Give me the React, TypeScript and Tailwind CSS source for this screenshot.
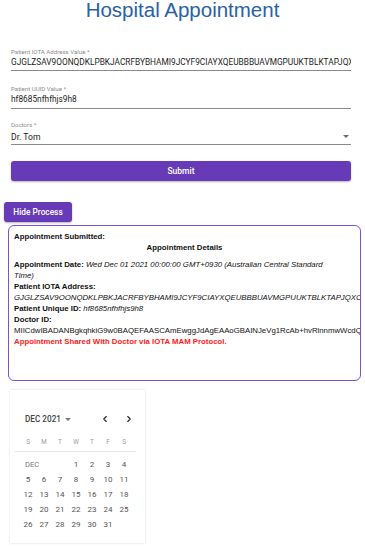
import { ChevronLeft, ChevronRight } from 'lucide-react';

const roboto = { fontFamily: 'Roboto, "Liberation Sans", sans-serif' };
const arial = { fontFamily: '"Liberation Sans", Arial, sans-serif' };

function Field({ label, value, select, top, pb }: { label: string; value: string; select?: boolean; top: string; pb: string }) {
  return (
    <div className={`${top} ml-[11px] w-[340px] border-b border-[#8a8a8a] ${pb} relative`}>
      <div className="text-[6.1px] leading-[8px] text-[#8c8c8c]">{label}</div>
      <div className={`${select ? 'text-[8.6px] leading-[12px] mt-[2px]' : 'text-[8.3px] leading-[10px] mt-[1px]'} text-[#1c1c1c] whitespace-nowrap overflow-hidden`}>
        {value}
      </div>
      {select && (
        <div className="absolute right-[2px] bottom-[6px] w-0 h-0 border-l-[3.5px] border-r-[3.5px] border-t-[3.5px] border-l-transparent border-r-transparent border-t-[#6b6b6b]" />
      )}
    </div>
  );
}

const weeks: (number | null)[][] = [
  [null, null, null, 1, 2, 3, 4],
  [5, 6, 7, 8, 9, 10, 11],
  [12, 13, 14, 15, 16, 17, 18],
  [19, 20, 21, 22, 23, 24, 25],
  [26, 27, 28, 29, 30, 31, null],
];

export default function App() {
  return (
    <div className="w-[365px] h-[550px] bg-white overflow-hidden" style={roboto}>
      <h1 className="-mt-[2px] text-center text-[20.5px] leading-[24px] text-[#2862a6]" style={arial}>
        Hospital Appointment
      </h1>

      <Field label="Patient IOTA Address Value *" value="GJGLZSAV9OONQDKLPBKJACRFBYBHAMI9JCYF9CIAYXQEUBBBUAVMGPUUKTBLKTAPJQX" top="mt-[26px]" pb="pb-[3px]" />
      <Field label="Patient UUID Value *" value="hf8685nfhfhjs9h8" top="mt-[14px]" pb="pb-[4px]" />
      <Field label="Doctors *" value="Dr. Tom" select top="mt-[12px]" pb="pb-[1px]" />

      <button className="mt-[16px] ml-[11px] w-[340px] h-[20px] rounded-[3px] bg-[#673ab7] text-white text-[8.5px] font-medium shadow-[0_1px_2px_rgba(0,0,0,0.3)]">
        Submit
      </button>

      <button className="block mt-[21px] ml-[4px] w-[68px] h-[20px] rounded-[3px] bg-[#673ab7] text-white text-[8.3px] font-medium shadow-[0_1px_2px_rgba(0,0,0,0.3)]">
        Hide Process
      </button>

      <div className="mt-[3px] ml-[8px] w-[353px] h-[156px] border-[1.5px] border-[#7b52d1] rounded-[6px] overflow-hidden pl-[5px] pt-[5px] text-[7.8px] leading-[11px] text-[#111] whitespace-nowrap" style={arial}>
        <div className="font-bold">Appointment Submitted:</div>
        <div className="font-bold text-center pr-[5px]">Appointment Details</div>
        <div className="mt-[6px] whitespace-normal pr-[20px]">
          <span className="font-bold">Appointment Date:</span>{' '}
          <span className="italic">Wed Dec 01 2021 00:00:00 GMT+0930 (Australian Central Standard Time)</span>
        </div>
        <div className="font-bold">Patient IOTA Address:</div>
        <div className="italic">GJGLZSAV9OONQDKLPBKJACRFBYBHAMI9JCYF9CIAYXQEUBBBUAVMGPUUKTBLKTAPJQXCDEFGH</div>
        <div>
          <span className="font-bold">Patient Unique ID:</span>{' '}
          <span className="italic">hf8685nfhfhjs9h8</span>
        </div>
        <div className="font-bold">Doctor ID:</div>
        <div>MIICdwIBADANBgkqhkiG9w0BAQEFAASCAmEwggJdAgEAAoGBAINJeVg1RcAb+hvRlnnmwWcdQk</div>
        <div className="font-bold text-[#ff1a1a]">Appointment Shared With Doctor via IOTA MAM Protocol.</div>
      </div>

      <div className="mt-[9px] ml-[10px] w-[135px] h-[153px] bg-white shadow-[0_0_2px_rgba(0,0,0,0.18)]">
        <div className="pt-[24px] pl-[15px] h-[34px] flex items-center">
          <div className="flex items-center text-[8.2px] font-medium text-[#444] h-[10px]">
            DEC 2021
            <span className="ml-[4px] w-0 h-0 border-l-[3px] border-r-[3px] border-t-[3px] border-l-transparent border-r-transparent border-t-[#777]" />
          </div>
          <ChevronLeft className="ml-[29px] text-[#222]" size={10} strokeWidth={2.6} />
          <ChevronRight className="ml-[14px] text-[#222]" size={10} strokeWidth={2.6} />
        </div>
        <div className="mt-[13px] ml-[10px] grid grid-cols-[repeat(7,16px)] h-[10px] text-[6.3px] leading-[10px] text-[#9a9a9a] text-center">
          {['S', 'M', 'T', 'W', 'T', 'F', 'S'].map((d, i) => (
            <div key={i}>{d}</div>
          ))}
        </div>
        <div className="mt-[4px] ml-[5px] w-[121px] border-t border-[#e2e2e2]" />
        <div className="mt-[5px] ml-[10px] grid grid-cols-[repeat(7,16px)] auto-rows-[15px] text-[8px] leading-[15px] text-[#555] text-center">
          {weeks.map((w, wi) =>
            w.map((d, di) => {
              if (wi === 0 && di === 0) {
                return (
                  <div key={`${wi}-${di}`} className="col-span-3 text-left pl-[5px] text-[7.5px] text-[#777]">
                    DEC
                  </div>
                );
              }
              if (wi === 0 && di < 3) return null;
              return <div key={`${wi}-${di}`}>{d ?? ''}</div>;
            })
          )}
        </div>
      </div>
    </div>
  );
}
